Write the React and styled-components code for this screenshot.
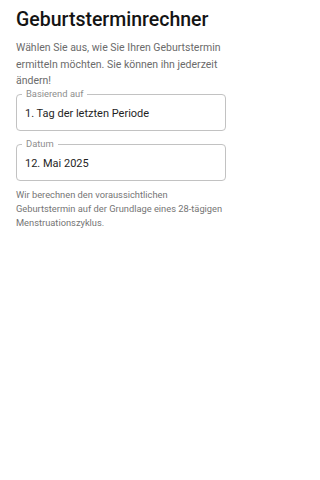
import styled, { createGlobalStyle } from "styled-components";

const GlobalStyle = createGlobalStyle`
  * { box-sizing: border-box; }
  body {
    margin: 0;
    background: #ffffff;
    font-family: Roboto, "Noto Sans", Arial, sans-serif;
    -webkit-font-smoothing: antialiased;
  }
`;

const fields = [
  { label: "Basierend auf", value: "1. Tag der letzten Periode" },
  { label: "Datum", value: "12. Mai 2025" },
];

export default function App() {
  return (
    <>
      <GlobalStyle />
      <Page>
        <Title>Geburtsterminrechner</Title>
        <Intro>
          Wählen Sie aus, wie Sie Ihren Geburtstermin ermitteln möchten. Sie
          können ihn jederzeit ändern!
        </Intro>
        <Fields>
          {fields.map((f) => (
            <Field key={f.label}>
              <Label>{f.label}</Label>
              <Value>{f.value}</Value>
            </Field>
          ))}
        </Fields>
        <Note>
          Wir berechnen den voraussichtlichen Geburtstermin auf der Grundlage
          eines 28-tägigen Menstruationszyklus.
        </Note>
      </Page>
    </>
  );
}

const Page = styled.div`
  width: 242px;
  min-height: 480px;
  padding: 8px 16px 16px;
  display: flex;
  flex-direction: column;
`;

const Title = styled.h1`
  margin: 0;
  font-size: 19.5px;
  line-height: 24px;
  font-weight: 500;
  color: #141414;
`;

const Intro = styled.p`
  margin: 8px 0 0;
  font-size: 10.5px;
  line-height: 16.5px;
  color: #6b6b6b;
`;

const Fields = styled.div`
  margin-top: 4.5px;
  display: flex;
  flex-direction: column;
  gap: 13px;
`;

const Field = styled.div`
  position: relative;
  height: 37px;
  padding: 0 8px;
  border: 1px solid #c2c2c2;
  border-radius: 4px;
  display: flex;
  align-items: center;
`;

const Label = styled.span`
  position: absolute;
  top: -6px;
  left: 5px;
  padding: 0 4px;
  background: #ffffff;
  font-size: 9.4px;
  line-height: 10px;
  color: #8e8e8e;
`;

const Value = styled.div`
  margin-top: 1px;
  font-size: 11px;
  line-height: 13px;
  color: #1f1f1f;
`;

const Note = styled.p`
  margin: 7px 0 0;
  font-size: 9.3px;
  line-height: 14px;
  color: #757575;
`;
